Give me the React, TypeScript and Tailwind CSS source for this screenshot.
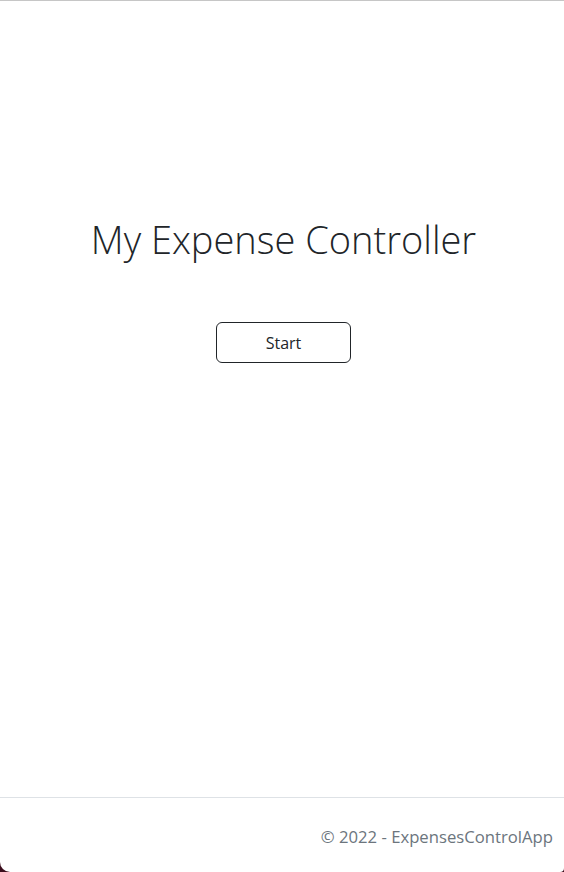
import React from "react";

const App: React.FC = () => {
  return (
    <div className="h-screen w-full bg-[#3b0d1c]">
      <div className="flex h-full flex-col rounded-bl-[10px] rounded-br-[4px] bg-white font-['Open_Sans',sans-serif] text-[#212529]">
        <header className="h-px w-full bg-[#c6c6c6]" />
        <main className="flex flex-1 flex-col items-center pt-[216px] pl-[3px]">
          <h1 className="text-[38px] font-light leading-[1.2]">
            My Expense Controller
          </h1>
          <button className="mt-[59px] h-[41px] w-[135px] rounded-[6px] border border-[#212529] bg-white pt-[2px] text-[16px]">
            Start
          </button>
        </main>
        <footer className="h-[75px] border-t border-[#dee2e6] pt-[27px] pr-[11px] text-right text-[16.7px] leading-6 text-[#6c757d]">
          © 2022 - ExpensesControlApp
        </footer>
      </div>
    </div>
  );
};

export default App;
